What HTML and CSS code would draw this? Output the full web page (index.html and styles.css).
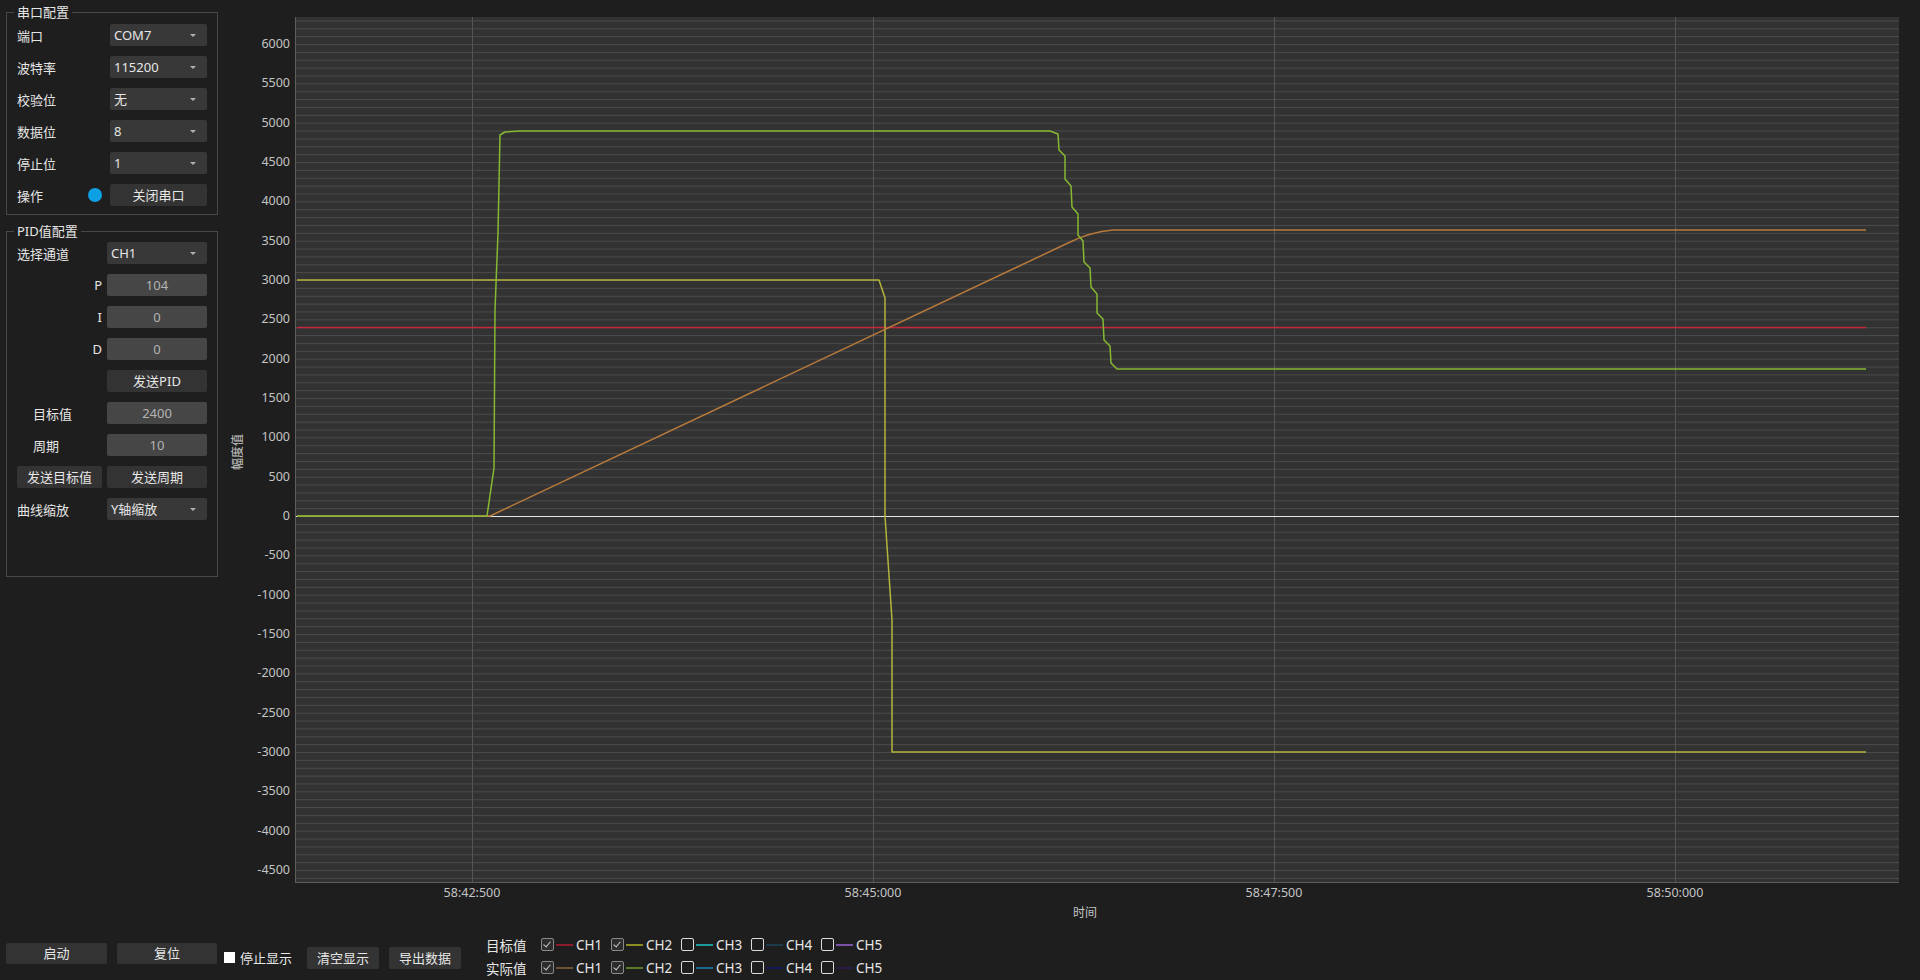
FILE: index.html
```html
<!DOCTYPE html>
<html lang="zh-CN">
  <head>
    <meta charset="UTF-8" />
    <meta name="viewport" content="width=device-width, initial-scale=1.0" />
    <title>PID调试助手</title>
    <link rel="stylesheet" href="styles.css">
  </head>
  <body>
    <div class="app">
      <aside class="side">
        <fieldset class="group serial">
          <legend>串口配置</legend>
          <label>端口</label><div class="combo">COM7</div>
          <label>波特率</label><div class="combo">115200</div>
          <label>校验位</label><div class="combo">无</div>
          <label>数据位</label><div class="combo">8</div>
          <label>停止位</label><div class="combo">1</div>
          <label class="op">操作<span class="dot"></span></label><button>关闭串口</button>
        </fieldset>

        <fieldset class="group pid">
          <legend>PID值配置</legend>
          <label>选择通道</label><div class="combo">CH1</div>
          <label class="right">P</label><div class="field">104</div>
          <label class="right">I</label><div class="field">0</div>
          <label class="right">D</label><div class="field">0</div>
          <span></span><button>发送PID</button>
          <label class="indent">目标值</label><div class="field">2400</div>
          <label class="indent">周期</label><div class="field">10</div>
          <button>发送目标值</button><button>发送周期</button>
          <label>曲线缩放</label><div class="combo">Y轴缩放</div>
        </fieldset>
      </aside>

      <svg class="chart" width="1695" height="935" viewBox="225 0 1695 935">
        <defs>
          <pattern id="hgrid" x="0" y="516" width="20" height="7.8667" patternUnits="userSpaceOnUse">
            <rect width="20" height="1" fill="#4a4a4a" />
          </pattern>
        </defs>
        <rect x="295" y="17" width="1604" height="865" fill="#323232" />
        <rect x="295" y="17" width="1604" height="865" fill="url(#hgrid)" />
        <g stroke="#555" stroke-width="1">
          <line x1="472.5" y1="17" x2="472.5" y2="882" />
          <line x1="873.5" y1="17" x2="873.5" y2="882" />
          <line x1="1274.5" y1="17" x2="1274.5" y2="882" />
          <line x1="1675.5" y1="17" x2="1675.5" y2="882" />
        </g>
        <g stroke="#5e5e5e" stroke-width="1">
          <line x1="295.5" y1="17" x2="295.5" y2="882.5" />
          <line x1="295" y1="882.5" x2="1899" y2="882.5" />
        </g>
        <line x1="296" y1="516.5" x2="1899" y2="516.5" stroke="#e6e6e6" stroke-width="1" />

        <g class="ticks" text-anchor="end">
          <text x="290" y="48">6000</text>
          <text x="290" y="87">5500</text>
          <text x="290" y="127">5000</text>
          <text x="290" y="166">4500</text>
          <text x="290" y="205">4000</text>
          <text x="290" y="245">3500</text>
          <text x="290" y="284">3000</text>
          <text x="290" y="323">2500</text>
          <text x="290" y="363">2000</text>
          <text x="290" y="402">1500</text>
          <text x="290" y="441">1000</text>
          <text x="290" y="481">500</text>
          <text x="290" y="520">0</text>
          <text x="290" y="559">-500</text>
          <text x="290" y="599">-1000</text>
          <text x="290" y="638">-1500</text>
          <text x="290" y="677">-2000</text>
          <text x="290" y="717">-2500</text>
          <text x="290" y="756">-3000</text>
          <text x="290" y="795">-3500</text>
          <text x="290" y="835">-4000</text>
          <text x="290" y="874">-4500</text>
        </g>
        <g class="ticks" text-anchor="middle">
          <text x="472" y="897">58:42:500</text>
          <text x="873" y="897">58:45:000</text>
          <text x="1274" y="897">58:47:500</text>
          <text x="1675" y="897">58:50:000</text>
        </g>
        <text class="axis-title" x="1085" y="917" text-anchor="middle">时间</text>
        <text class="axis-title" x="0" y="0" text-anchor="middle" transform="translate(242 452) rotate(-90)">幅度值</text>

        <g fill="none" stroke-width="1.5" stroke-linejoin="round">
          <path stroke="#c2283c" d="M297 327.5 H1866" />
          <path stroke="#b4b43c" d="M297 280 H879 L885 298 V516 L892 620 V752 H1866" />
          <path stroke="#b87a3c" d="M297 516 H490 L1068 243 Q1090 232 1113 230 H1866" />
          <path stroke="#86b832" d="M297 516 H487 L494 468 L495 310 L498 233 L500 135 L505 132 L520 131 H1050 L1058 134 L1059 150 L1065 156 L1065 179 L1071 186 L1072 207 L1078 214 L1078 235 L1083 241 L1084 262 L1090 268 L1091 287 L1097 294 L1097 313 L1103 319 L1104 340 L1110 346 L1111 363 L1117 369 H1866" />
        </g>
      </svg>
    </div>

    <footer class="bar">
      <button class="big">启动</button>
      <button class="big">复位</button>
      <label class="stop"><span class="box"></span>停止显示</label>
      <button class="small">清空显示</button>
      <button class="small">导出数据</button>

      <div class="legend">
        <span class="row-name">目标值</span>
        <span class="ch"><i class="cb on"></i><b style="background:#8c1c2c"></b>CH1</span>
        <span class="ch"><i class="cb on"></i><b style="background:#8c8c22"></b>CH2</span>
        <span class="ch"><i class="cb"></i><b style="background:#1c9c9c"></b>CH3</span>
        <span class="ch"><i class="cb"></i><b style="background:#1c3a4a"></b>CH4</span>
        <span class="ch"><i class="cb"></i><b style="background:#7a52aa"></b>CH5</span>

        <span class="row-name">实际值</span>
        <span class="ch"><i class="cb on"></i><b style="background:#6c5232"></b>CH1</span>
        <span class="ch"><i class="cb on"></i><b style="background:#5a7a2a"></b>CH2</span>
        <span class="ch"><i class="cb"></i><b style="background:#1c6a92"></b>CH3</span>
        <span class="ch"><i class="cb"></i><b style="background:#12185a"></b>CH4</span>
        <span class="ch"><i class="cb"></i><b style="background:#2c1a4a"></b>CH5</span>
      </div>
    </footer>
  </body>
</html>
```

FILE: styles.css
```css
* {
  box-sizing: border-box;
}

html,
body {
  margin: 0;
  height: 100%;
  overflow: hidden;
}

body {
  background: #1e1e1e;
  color: #e6e6e6;
  font-family: "Noto Sans", "Noto Sans CJK SC", sans-serif;
  font-size: 13px;
  user-select: none;
}

button {
  height: 22px;
  padding: 0;
  border: none;
  border-radius: 2px;
  background: #333;
  color: #e6e6e6;
  font: inherit;
  line-height: 22px;
}

.app {
  display: flex;
  height: 935px;
}

.side {
  width: 225px;
  flex: none;
}

/* group boxes */

.group {
  display: grid;
  grid-auto-rows: 22px;
  row-gap: 10px;
  align-items: center;
  width: 212px;
  margin: 0 0 0 6px;
  padding: 3px 10px 8px;
  border: 1px solid #484848;
}

.group legend {
  margin-left: -3px;
  padding: 0 3px;
  line-height: 18px;
}

.serial {
  margin-top: 3px;
  grid-template-columns: 1fr 97px;
}

.pid {
  margin-top: 7px;
  padding-top: 2px;
  padding-bottom: 56px;
  grid-template-columns: 1fr 100px;
  column-gap: 5px;
}

.group label {
  white-space: nowrap;
}

.group .right {
  text-align: right;
}

.group .indent {
  padding-left: 16px;
}

.op {
  display: flex;
  justify-content: space-between;
  align-items: center;
  padding-right: 8px;
}

.dot {
  width: 14px;
  height: 14px;
  border-radius: 50%;
  background: #0ea0e4;
}

.combo,
.field {
  height: 22px;
  border-radius: 2px;
  line-height: 22px;
}

.combo {
  position: relative;
  padding-left: 4px;
  background: #383838;
}

.combo::after {
  content: "";
  position: absolute;
  top: 10px;
  right: 11px;
  border-top: 3px solid #b0b0b0;
  border-left: 3px solid transparent;
  border-right: 3px solid transparent;
}

.field {
  background: #464646;
  color: #b4b4b4;
  text-align: center;
}

/* chart */

.chart {
  display: block;
  flex: none;
  font-family: "Noto Sans", "Noto Sans CJK SC", sans-serif;
}

.ticks text {
  fill: #c4c4c4;
  font-size: 12.5px;
}

.axis-title {
  fill: #c4c4c4;
  font-size: 12px;
}

/* bottom bar */

.bar {
  display: flex;
  align-items: center;
  height: 45px;
  padding-left: 6px;
}

.bar .big {
  align-self: flex-start;
  margin-top: 8px;
  height: 21px;
  line-height: 21px;
}

.bar .big:nth-child(1) {
  width: 101px;
  margin-right: 10px;
}

.bar .big:nth-child(2) {
  width: 100px;
  margin-right: 7px;
}

.stop {
  display: flex;
  align-items: center;
  gap: 5px;
  margin-right: 15px;
  margin-top: -1px;
}

.stop .box {
  width: 11px;
  height: 11px;
  background: #fff;
}

.bar .small {
  width: 72px;
  margin-right: 10px;
}

.bar .small + .small {
  margin-right: 25px;
}

.legend {
  display: grid;
  grid-template-columns: 55px repeat(5, 70px);
  grid-auto-rows: 20px;
  row-gap: 3px;
  align-items: center;
  margin-top: -3px;
  font-size: 13.5px;
}

.ch {
  display: flex;
  align-items: center;
}

.cb {
  position: relative;
  width: 13px;
  height: 13px;
  margin-right: 2px;
  border: 1px solid #dcdcdc;
  border-radius: 2px;
}

.cb.on {
  border-color: #8a8a8a;
  background: #2c2c2c;
}

.cb.on::after {
  content: "";
  position: absolute;
  left: 3px;
  top: 1px;
  width: 3px;
  height: 6px;
  border-right: 1px solid #c8c8c8;
  border-bottom: 1px solid #c8c8c8;
  transform: rotate(40deg);
}

.ch b {
  width: 17px;
  height: 2px;
  margin-right: 3px;
}
```
